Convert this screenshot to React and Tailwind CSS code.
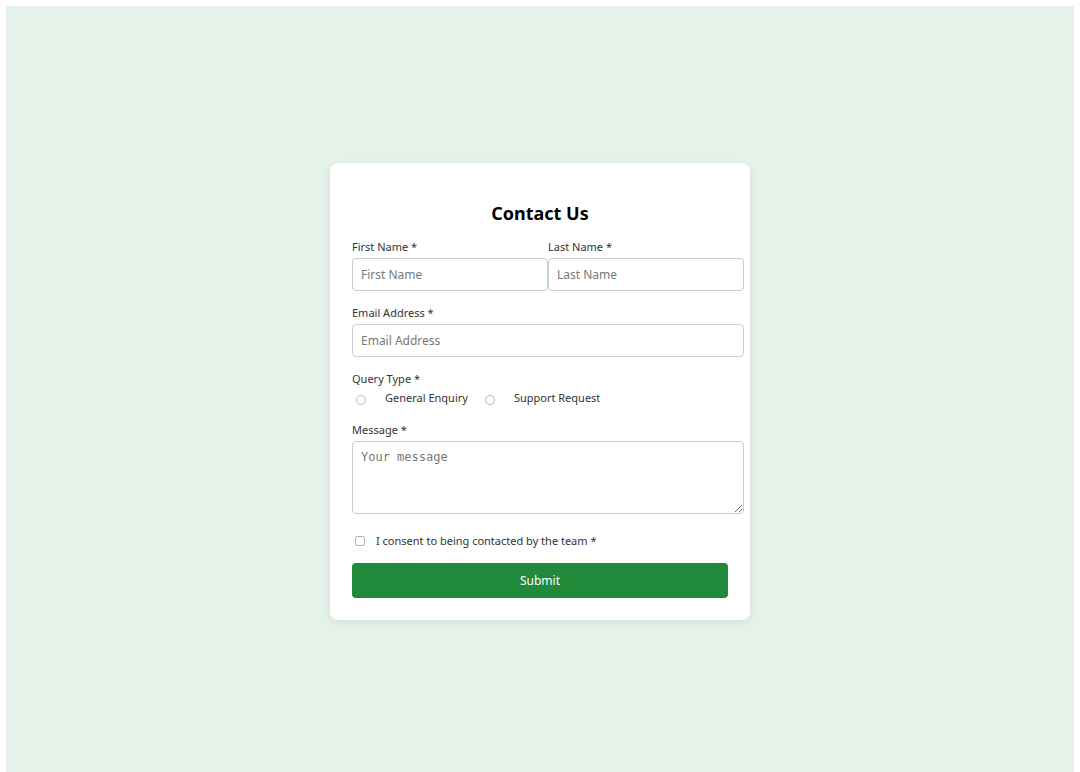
export default function App() {
  return (
    <div className="bg-white p-[6px] font-['Noto_Sans',sans-serif]">
      <div className="flex h-[771px] items-center justify-center bg-[#e4f2ea]">
        <form className="w-[420px] rounded-lg bg-white px-[22px] pt-[37px] pb-[22px] shadow-[0_2px_8px_rgba(0,0,0,0.08)]">
          <h2 className="text-center text-[18px] font-bold leading-[26px] text-black">Contact Us</h2>

          <div className="mt-[13px] flex">
            <div className="w-[196px]">
              <label className="mb-[3px] block text-[11px] leading-[16px] text-[#333]">First Name *</label>
              <input
                placeholder="First Name"
                className="h-[33px] w-[196px] rounded-[4px] border border-[#ccc] px-2 text-[12px] placeholder:text-[#777] outline-none"
              />
            </div>
            <div className="w-[196px]">
              <label className="mb-[3px] block text-[11px] leading-[16px] text-[#333]">Last Name *</label>
              <input
                placeholder="Last Name"
                className="h-[33px] w-[196px] rounded-[4px] border border-[#ccc] px-2 text-[12px] placeholder:text-[#777] outline-none"
              />
            </div>
          </div>

          <label className="mt-[14px] mb-[3px] block text-[11px] leading-[16px] text-[#333]">Email Address *</label>
          <input
            placeholder="Email Address"
            className="h-[33px] w-[392px] rounded-[4px] border border-[#ccc] px-2 text-[12px] placeholder:text-[#777] outline-none"
          />

          <label className="mt-[14px] block text-[11px] leading-[16px] text-[#333]">Query Type *</label>
          <div className="mt-[3px] flex items-center text-[11px] leading-[16px] text-[#333]">
            <input type="radio" name="q" className="ml-[4px] mt-[4px] h-[10px] w-[10px] opacity-50" />
            <span className="ml-[19px]">General Enquiry</span>
            <input type="radio" name="q" className="ml-[17px] mt-[4px] h-[10px] w-[10px] opacity-50" />
            <span className="ml-[19px]">Support Request</span>
          </div>

          <label className="mt-[16px] mb-[3px] block text-[11px] leading-[16px] text-[#333]">Message *</label>
          <textarea
            placeholder="Your message"
            className="block h-[73px] w-[392px] rounded-[4px] border border-[#ccc] px-2 py-[6px] font-['DejaVu_Sans_Mono',monospace] text-[12px] placeholder:text-[#777] outline-none"
          />

          <div className="mt-[19px] flex items-center text-[11px] leading-[16px] text-[#333]">
            <input type="checkbox" className="ml-[3px] h-[10px] w-[10px] opacity-60" />
            <span className="ml-[11px]">I consent to being contacted by the team *</span>
          </div>

          <button
            type="button"
            className="mt-[14px] h-[35px] w-full rounded-[4px] bg-[#218a3a] text-[12px] text-white"
          >
            Submit
          </button>
        </form>
      </div>
    </div>
  );
}
